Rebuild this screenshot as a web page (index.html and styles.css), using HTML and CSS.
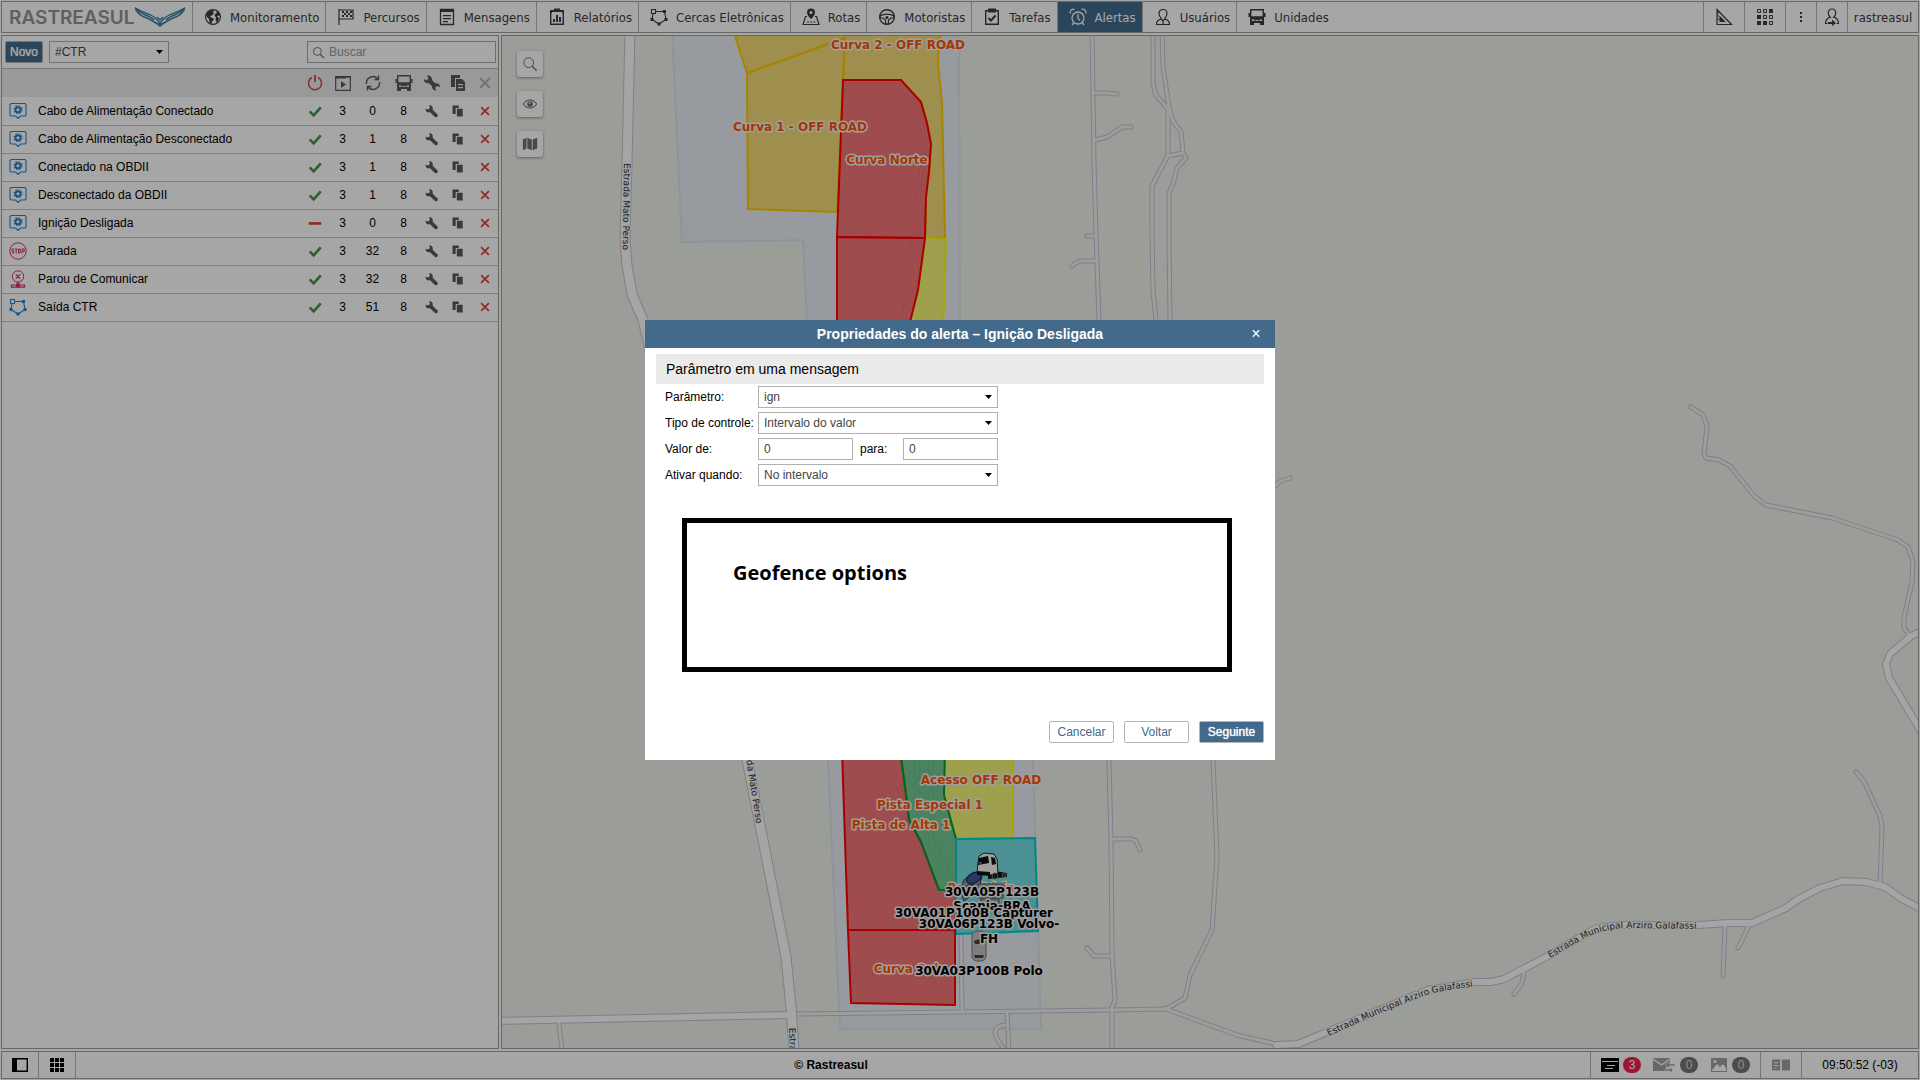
FILE: index.html
```html
<!DOCTYPE html>
<html lang="pt-BR">
  <head>
    <meta charset="UTF-8" />
    <meta name="viewport" content="width=device-width, initial-scale=1.0" />
    <title>Rastreasul</title>
    <link rel="stylesheet" href="styles.css">
  </head>
  <body>
    <!-- Icon set -->
    <svg class="sprite" aria-hidden="true">
      <symbol id="i-globe" viewBox="0 0 18 18">
        <circle cx="9" cy="9" r="7.4" fill="none" stroke="currentColor" stroke-width="1.2" />
        <path d="M3 5l4-3 3 .5-1 2 1 1-2 2-2 .5 1 1.500 2 .5 1 1.500-2 2-.5 3-2-2.500-.5-3L3 9 2 7zM12 2.500l3 2.500 1 3-1.500-.5-1.500 1 2 1.500-.5 2.500-2 2-1-3 .5-2-1.500-2 1-2 1.500-.5z" fill="currentColor" />
      </symbol>
      <symbol id="i-flag" viewBox="0 0 18 18">
        <path d="M2 1v16M2 2h14v9H2" fill="none" stroke="currentColor" stroke-width="1.2" />
        <path d="M5 3h2v2H5zM9 3h2v2H9zM13 3h2v2h-2zM7 5h2v2H7zM11 5h2v2h-2zM5 7h2v2H5zM9 7h2v2H9zM13 7h2v2h-2z" fill="currentColor" />
      </symbol>
      <symbol id="i-doc" viewBox="0 0 18 18">
        <path d="M2.500 1.500h13v15h-13z" fill="none" stroke="currentColor" stroke-width="1.3" />
        <path d="M2 1h14v3H2zM5 7h8v1.300H5zM5 10h8v1.300H5zM5 13h5v1.300H5z" fill="currentColor" />
      </symbol>
      <symbol id="i-report" viewBox="0 0 18 18">
        <path d="M2.700 2.700h12.600v13.600H2.700z" fill="none" stroke="currentColor" stroke-width="1.400" />
        <path d="M2 2h14v3h-2V4H4v1H2zM6 .5h6V3H6zM5 11h2v3H5zM8 7h2v7H8zM11 9h2v5h-2z" fill="currentColor" />
      </symbol>
      <symbol id="i-fence" viewBox="0 0 18 18">
        <path d="M3.500 3.500h11l1.500 8-7 4.500-7-4.500z" fill="none" stroke="currentColor" stroke-width="1.100" />
        <path d="M1.500 1.500h4v4h-4z" fill="var(--hole, #fff)" stroke="currentColor" stroke-width="1.100" />
        <path d="M13 2h3v3h-3zM.5 10h3v3h-3zM14.500 10h3v3h-3zM7.500 14.500h3v3h-3z" fill="currentColor" />
      </symbol>
      <symbol id="i-route" viewBox="0 0 18 18">
        <path d="M5 8.500H3.500L1 16.500h16l-2.500-8H13" fill="none" stroke="currentColor" stroke-width="1.200" />
        <path d="M9 .5a4 4 0 0 0-4 4c0 3 4 6.500 4 6.500s4-3.500 4-6.500a4 4 0 0 0-4-4zm0 2.500a1.500 1.500 0 1 1 0 3 1.500 1.500 0 0 1 0-3z" fill="currentColor" />
        <path d="M5 14h9" stroke="currentColor" stroke-width="1.200" stroke-dasharray="2 1.200" />
      </symbol>
      <symbol id="i-wheel" viewBox="0 0 18 18">
        <circle cx="9" cy="9" r="7.300" fill="none" stroke="currentColor" stroke-width="1.400" />
        <path d="M2 8c4-2.500 10-2.500 14 0v2h-3l-2.500 2v4h-3v-4L5 10H2z" fill="none" stroke="currentColor" stroke-width="1.200" />
        <circle cx="9" cy="9.500" r="1.500" fill="currentColor" />
      </symbol>
      <symbol id="i-task" viewBox="0 0 18 18">
        <path d="M2.700 2.700h12.600v13.600H2.700z" fill="none" stroke="currentColor" stroke-width="1.400" />
        <path d="M5 .5h8v4H5z" fill="currentColor" />
        <path d="M5.500 10l2.500 2.500 4.500-5" fill="none" stroke="currentColor" stroke-width="2" />
      </symbol>
      <symbol id="i-alarm" viewBox="0 0 18 18">
        <circle cx="9" cy="10" r="6" fill="none" stroke="currentColor" stroke-width="1.300" />
        <path d="M1.500 5.500a3 3 0 0 1 4-4M16.500 5.500a3 3 0 0 0-4-4M4.500 15L3 17M13.500 15l1.500 2M9 6v4.500l2 2" fill="none" stroke="currentColor" stroke-width="1.300" />
      </symbol>
      <symbol id="i-user" viewBox="0 0 18 18">
        <path d="M9 1.500c2.500 0 4 1.600 4 4 0 2-1 3.500-2 4.200v1.500c3 .6 4.500 1.800 4.500 5.300h-13c0-3.500 1.500-4.700 4.500-5.300V9.700c-1-.7-2-2.200-2-4.200 0-2.400 1.500-4 4-4zM7 11l2 2 2-2M9 13v3" fill="none" stroke="currentColor" stroke-width="1.200" />
      </symbol>
      <symbol id="i-bus" viewBox="0 0 18 18">
        <path d="M2.700 1.700h12.600V9H2.700z" fill="none" stroke="currentColor" stroke-width="1.400" />
        <path d="M2 9h14v6H2zM2 15h4v2H2zM12 15h4v2h-4zM.5 5H2v4H.5zM16 5h1.500v4H16z" fill="currentColor" />
        <path d="M4 11.500h2.500v1.500H4zM11.500 11.500H14v1.500h-2.500zM7.500 12h3v1h-3z" fill="var(--hole, #fff)" />
      </symbol>
      <symbol id="i-ruler" viewBox="0 0 18 18">
        <path d="M2 1.500l14.500 15H2zM5 9l4.500 4.500H5zM2 5h2M2 8h2M2 11h2" fill="none" stroke="currentColor" stroke-width="1.200" />
        <path d="M5 9l4.500 4.500H5z" fill="currentColor" />
      </symbol>
      <symbol id="i-apps" viewBox="0 0 18 18">
        <path d="M1.500 1.500h3v3h-3zM7.500 1.500h3v3h-3zM7.500 7.500h3v3h-3zM13.500 7.500h3v3h-3zM13.500 13.500h3v3h-3z" fill="none" stroke="currentColor" />
        <path d="M13 1h4v4h-4zM1 7h4v4H1zM1 13h4v4H1zM7 13h4v4H7z" fill="currentColor" />
      </symbol>
      <symbol id="i-dots" viewBox="0 0 18 18">
        <path d="M8 4h2v2H8zM8 8h2v2H8zM8 12h2v2H8z" fill="currentColor" />
      </symbol>
      <symbol id="i-login" viewBox="0 0 18 18">
        <path d="M9 1c2.300 0 3.700 1.500 3.700 4 0 2-1 3.500-2 4.200 3 .8 4.800 2 4.800 6.300h-2M4.500 15.500h-2c0-4.300 1.800-5.500 4.800-6.300-1-.7-2-2.200-2-4.200 0-2.500 1.400-4 3.700-4" fill="none" stroke="currentColor" stroke-width="1.200" />
        <path d="M5 14h4v-2.500l4 3.500-4 3V16H5z" fill="currentColor" />
      </symbol>
      <symbol id="i-search" viewBox="0 0 18 18">
        <circle cx="7.500" cy="7.500" r="5.500" fill="none" stroke="currentColor" stroke-width="1.100" />
        <path d="M11.500 11.500l5 5" stroke="currentColor" stroke-width="1.500" />
      </symbol>
      <symbol id="i-eye" viewBox="0 0 18 18">
        <path d="M1.500 9c4-6 11-6 15 0-4 6-11 6-15 0z" fill="none" stroke="currentColor" stroke-width="1.200" />
        <circle cx="9" cy="9" r="3.200" fill="currentColor" />
        <circle cx="8.500" cy="8" r="1" fill="#fff" />
      </symbol>
      <symbol id="i-map" viewBox="0 0 18 18">
        <path d="M1 4l4-2v12l-4 2zM6 2l5 2v12l-5-2zM12 4l5-2v12l-5 2z" fill="currentColor" />
      </symbol>
      <symbol id="i-power" viewBox="0 0 18 18">
        <path d="M6 3.500a6.500 6.500 0 1 0 6 0" fill="none" stroke="currentColor" stroke-width="1.500" />
        <path d="M9 1v7" stroke="currentColor" stroke-width="1.800" />
      </symbol>
      <symbol id="i-play" viewBox="0 0 18 18">
        <path d="M1.700 2.700h14.600v13.600H1.700z" fill="none" stroke="currentColor" stroke-width="1.200" />
        <path d="M1 2h11v2.500H1zM13 2h1.500v2H13zM15.500 2H17v2h-1.500zM7 7l5 3.500L7 14z" fill="currentColor" />
      </symbol>
      <symbol id="i-refresh" viewBox="0 0 18 18">
        <path d="M2.500 10a6.500 6.500 0 0 1 11-5.500M15.500 8a6.500 6.500 0 0 1-11 5.500M14.500 1.500v4h-4M3.500 16.500v-4h4" fill="none" stroke="currentColor" stroke-width="1.400" />
      </symbol>
      <symbol id="i-wrench" viewBox="0 0 18 18">
        <path d="M5.500 1.500l.8 3.500L4 7 .8 6C.5 9.500 3 11.500 6.500 10.500l6.300 6.200c2 1.300 4.700-1.200 3.400-3.200L9.800 7.500C10.800 4 8.800 1.500 5.500 1.500z" fill="currentColor" />
      </symbol>
      <symbol id="i-wrench2" viewBox="0 0 18 18">
        <path d="M4 1.500l1.500 3-2 2-2.500-1.500c-.5 3 2 4.700 4.500 4L9 12c-.3 3 2 4.500 4.500 4.500L12 14l2-2 3 1c0-3-2.500-4.200-4.500-3.500L9 6C9.300 3 7 1 4 1.500z" fill="currentColor" />
      </symbol>
      <symbol id="i-copy" viewBox="0 0 18 18">
        <path d="M2 2h8v3H6v8H2zM7.500 6h7.500v10H7.500z" fill="currentColor" />
      </symbol>
      <symbol id="i-copy2" viewBox="0 0 18 18">
        <path d="M2 1h9v3H6v9H2zM7 5h6l3 3v9H7z" fill="currentColor" />
        <path d="M9 10h5v1.200H9zM9 13h5v1.200H9z" fill="var(--hole, #fff)" />
      </symbol>
      <symbol id="i-x" viewBox="0 0 18 18">
        <path d="M4 4l10 10M14 4L4 14" stroke="currentColor" stroke-width="2.200" />
      </symbol>
      <symbol id="i-check" viewBox="0 0 18 18">
        <path d="M3 9.500l4.500 4.500L15.500 5" fill="none" stroke="currentColor" stroke-width="2.800" />
      </symbol>
      <symbol id="i-minus" viewBox="0 0 18 18">
        <path d="M2 8h14v3H2z" fill="currentColor" />
      </symbol>
      <symbol id="i-param" viewBox="0 0 18 18">
        <path d="M2 1.500h14l1 1V13l-1 1h-4.500L9 16.500 6.500 14H2l-1-1V2.500z" fill="none" stroke="currentColor" stroke-width="1.100" />
        <circle cx="9" cy="7.700" r="2.500" fill="none" stroke="currentColor" stroke-width="2" />
        <circle cx="9" cy="7.700" r="3.900" fill="none" stroke="currentColor" stroke-width="1.300" stroke-dasharray="1.500 1.560" />
      </symbol>
      <symbol id="i-stop" viewBox="0 0 18 18">
        <circle cx="9" cy="9" r="8.200" fill="none" stroke="currentColor" />
        <path d="M5 7H3v2h1.800v2H2.500M5.800 7h2.700M7.200 7v4.500M9.500 7h1.700v4H9.500zM13 11.500V7h2.200v2.500H13" fill="none" stroke="currentColor" />
      </symbol>
      <symbol id="i-lost" viewBox="0 0 18 18">
        <circle cx="9" cy="6.500" r="5.700" fill="none" stroke="currentColor" />
        <path d="M6.800 4.300l4.400 4.400M11.200 4.300L6.800 8.700M9 12v3M2.500 15h13v2.200h-13z" fill="none" stroke="currentColor" stroke-width="1.200" />
        <path d="M7 13.500h4V17H7z" fill="currentColor" />
      </symbol>
      <symbol id="i-panel" viewBox="0 0 18 18">
        <path d="M1.700 2.700h14.600v12.600H1.700z" fill="none" stroke="currentColor" stroke-width="1.400" />
        <path d="M1 2h5v14H1z" fill="currentColor" />
      </symbol>
      <symbol id="i-grid" viewBox="0 0 18 18">
        <path d="M2 2h4v4H2zM7 2h4v4H7zM12 2h4v4h-4zM2 7h4v4H2zM7 7h4v4H7zM12 7h4v4h-4zM2 12h4v4H2zM7 12h4v4H7zM12 12h4v4h-4z" fill="currentColor" />
      </symbol>
      <symbol id="i-window" viewBox="0 0 18 18">
        <path d="M0 2h18v14H0z" fill="currentColor" />
        <path d="M1 5h16v1H1zM6 9h8v1H6zM4 12h8v1H4z" fill="#fff" />
      </symbol>
      <symbol id="i-mail" viewBox="0 0 23 18">
        <path d="M0 2h17v6h-3v3h-1v4H0z" fill="currentColor" />
        <path d="M0 3l8.500 6L17 3" fill="none" stroke="#fff" stroke-width="1.300" />
        <path d="M12 9l4-3v2h6v2h-6v2zM20 14l-3-3v2h-5v2h5v2z" fill="currentColor" stroke="#fff" stroke-width=".5" />
      </symbol>
      <symbol id="i-image" viewBox="0 0 18 18">
        <path d="M1 2h16v14H1z" fill="currentColor" />
        <path d="M2 14l5-6 3 3 3-3 3 4v3H2z" fill="#fff" />
        <circle cx="5" cy="5.500" r="1.500" fill="#fff" />
      </symbol>
      <symbol id="i-news" viewBox="0 0 20 18">
        <path d="M0 3h9v12H0zM11 3h9v12h-9z" fill="currentColor" />
        <path d="M2 6h5v1H2zM2 9h5v1H2zM2 12h3v1H2z" fill="#fff" />
      </symbol>
    </svg>

    <div class="app">
      <header class="topbar">
        <a href="#" class="logo">
          <span>RASTREASUL</span>
          <svg class="logo-wings" viewBox="0 0 50 20" aria-hidden="true">
            <path d="M0 1c8 5 14 5 19 9 3 2.500 5 4 6 7 1-3 3-4.500 6-7 5-4 11-4 19-9-4 9-11 9-16 12-4 2-6 4-9 6-3-2-5-4-9-6C11 10 4 10 0 1z" fill="none" stroke="currentColor" stroke-width="1.500" />
            <path d="M3 4c6 4 12 5 16 9M47 4c-6 4-12 5-16 9M22 10l3 3 3-3" fill="none" stroke="currentColor" stroke-width="1.500" />
            <path d="M20 14l5 3 5-3-5 6z" fill="currentColor" />
          </svg>
        </a>
        <nav class="nav">
          <a href="#"><svg><use href="#i-globe" /></svg>Monitoramento</a>
          <a href="#"><svg><use href="#i-flag" /></svg>Percursos</a>
          <a href="#"><svg><use href="#i-doc" /></svg>Mensagens</a>
          <a href="#"><svg><use href="#i-report" /></svg>Relatórios</a>
          <a href="#"><svg><use href="#i-fence" /></svg>Cercas Eletrônicas</a>
          <a href="#"><svg><use href="#i-route" /></svg>Rotas</a>
          <a href="#"><svg><use href="#i-wheel" /></svg>Motoristas</a>
          <a href="#"><svg><use href="#i-task" /></svg>Tarefas</a>
          <a href="#" class="active"><svg><use href="#i-alarm" /></svg>Alertas</a>
          <a href="#"><svg><use href="#i-user" /></svg>Usuários</a>
          <a href="#"><svg><use href="#i-bus" /></svg>Unidades</a>
        </nav>
        <div class="tools">
          <button type="button" class="tool" aria-label="Ferramentas"><svg><use href="#i-ruler" /></svg></button>
          <button type="button" class="tool" aria-label="Aplicativos"><svg><use href="#i-apps" /></svg></button>
          <button type="button" class="tool narrow" aria-label="Mais"><svg><use href="#i-dots" /></svg></button>
          <button type="button" class="tool narrow" aria-label="Entrar como"><svg><use href="#i-login" /></svg></button>
          <button type="button" class="tool account">rastreasul</button>
        </div>
      </header>

      <main class="workspace">
        <section class="panel">
          <form class="filter">
            <button type="button" class="btn primary">Novo</button>
            <select class="field group" aria-label="Recurso">
              <option>#CTR</option>
            </select>
            <label class="search">
              <svg><use href="#i-search" /></svg>
              <input type="text" placeholder="Buscar" aria-label="Buscar" />
            </label>
          </form>
          <table class="alerts">
            <colgroup>
              <col class="c-icon"><col><col class="c-27"><col class="c-29"><col class="c-31"><col class="c-31"><col class="c-25"><col class="c-27"><col class="c-27">
            </colgroup>
            <thead>
              <tr>
                <th></th>
                <th></th>
                <th class="red"><svg><use href="#i-power" /></svg></th>
                <th><svg><use href="#i-play" /></svg></th>
                <th><svg><use href="#i-refresh" /></svg></th>
                <th><svg><use href="#i-bus" /></svg></th>
                <th><svg><use href="#i-wrench2" /></svg></th>
                <th><svg><use href="#i-copy2" /></svg></th>
                <th class="muted"><svg><use href="#i-x" /></svg></th>
              </tr>
            </thead>
            <tbody id="alert-rows"></tbody>
          </table>
        </section>

        <section class="map">
          <svg class="map-canvas" viewBox="502 36 1416 1012" preserveAspectRatio="xMidYMid slice">
            <defs>
              <path id="mato-1" d="M624 163L623 230L622 300" />
              <path id="mato-2" d="M741 738L747 764L757 827L764 860" />
              <path id="mato-3" d="M789 1028L793 1120" />
              <path id="arz-1" d="M1329 1036C1350 1026 1400 1004 1430 994Q1455 987 1500 985" />
              <path id="arz-2" d="M1550 958L1580 941Q1600 929 1625 928L1720 929" />
              <g id="minor-roads">
                <path d="M1092 30L1093 93L1094 163L1096 233L1099 320L1109 760L1111 840L1112 953L1115 1000L1112 1008V1050" />
                <path d="M1095 93L1107 93L1117 94M1095 140L1107 137L1122 127L1131 127M1087 236H1095M1096 261H1079L1072 266" />
                <path d="M1153 30V83L1156 95L1168 109V155L1152 186V230L1153 290L1156 320L1213 760L1217 857L1212 930L1190 975L1185 998L1166 1009" />
                <path d="M1162 30L1163 67L1169 107L1173 121L1181 132L1183 153L1186 158L1177 168L1173 184L1169 193V237L1170 320M1168 156L1183 153" />
                <path d="M1111 839L1132 839L1136 841L1140 850M1111 956H1094L1087 948" />
                <path d="M798 1014L1111 1010L1166 1009L1237 1035L1280 1045" />
                <path d="M1007 1013L1009 1050M1007 1025Q997 1025 995 1032Q995 1038 1005 1050M559 1024L562 1050M961 935L962 1010" />
                <path d="M1691 407L1703 415L1707 426L1704 453L1706 458L1719 460L1730 466L1755 497L1766 505L1832 518L1898 540L1908 547L1913 562L1912 582L1904 617V628L1909 635" />
                <path d="M1856 772L1865 783L1880 816L1882 827L1880 884M1725 926L1723 976M1749 926L1738 948M1524 971L1522 983L1514 994M1270 489L1281 481L1290 478" />
              </g>
              <g id="mid-roads">
                <path d="M495 1021L791 1015M1925 632L1918 633L1911 636L1890 654L1886 664L1889 678L1925 738" />
                <path d="M1277 1045L1298 1044L1327 1032L1403 1000L1428 990L1475 982H1491L1504 979L1525 968L1550 955L1580 937L1597 928L1622 925H1698L1729 923H1752L1786 908L1797 900L1820 888L1843 881L1866 882L1885 887L1902 899L1925 911" />
              </g>
              <path id="main-road" d="M630 30L627 163L625 240L627 265L632 294L643 320L747 760L763 840L786 957L791 1007L794 1050" />
              <g id="track">
                <path d="M868 320V176L857 130Q852 105 866 98Q880 86 900 94Q926 106 924 150L904 320M868 760V950Q872 990 905 989Q945 988 949 950L890 760" />
                <path d="M917 760V808L951 880M931 760V845L950 880" />
              </g>
            </defs>

            <rect x="0" y="0" width="3000" height="2000" fill="#eff1eb" />
            <path class="site" d="M672 30L682 242L803 240L807 320L828 760L840 1029H1041L1033 760L960 320L959 30Z" />

            <use href="#minor-roads" class="casing minor" />
            <use href="#mid-roads" class="casing mid" />
            <use href="#main-road" class="casing main" />
            <use href="#minor-roads" class="road minor" />
            <use href="#mid-roads" class="road mid" />
            <use href="#main-road" class="road main" />
            <use href="#track" class="casing minor faint" />
            <use href="#track" class="road track" />

            <g class="zones">
              <path class="z-amber" d="M733 30L747 73L845 38V30Z" />
              <path class="z-amber" d="M747 73L748 209L837 212L843 80L845 38Z" />
              <path class="z-amber" d="M845 30H940L938 63L942 103L945 238H925L926 197L929 172L931 144L927 123L921 102L901 80H843Z" />
              <path class="z-yellow" d="M925 238L946 239L943 330H908L918 290Z" />
              <path class="z-red" d="M837 237L925 238L918 290L908 330H837Z" />
              <path class="z-red" d="M843 80H901L921 102L927 123L931 144L929 172L926 197L925 238L837 237Z" />
              <path class="z-yellow" d="M945 750L944 795L956 839L1013 838V750Z" />
              <path class="z-red" d="M842 750L848 930H955L956 890H939L921 842L909 820L905 787L900 750Z" />
              <path class="z-green" d="M900 750L905 787L909 820L921 842L939 890H956V839L944 795L945 750Z" />
              <path class="z-teal" d="M956 839L1035 838L1038 931L956 934Z" />
              <path class="z-red" d="M848 930H955V1005L851 1003Z" />
            </g>

            <g class="road-name">
              <text><textPath href="#mato-1">Estrada Mato Perso</textPath></text>
              <text><textPath href="#mato-2">Estrada Mato Perso</textPath></text>
              <text><textPath href="#mato-3">Estrada</textPath></text>
              <text><textPath href="#arz-1">Estrada Municipal Arziro Galafassi</textPath></text>
              <text><textPath href="#arz-2">Estrada Municipal Arziro Galafassi</textPath></text>
            </g>

            <g class="zone-name">
              <text x="898" y="49">Curva 2 - OFF ROAD</text>
              <text x="800" y="131">Curva 1 - OFF ROAD</text>
              <text x="887" y="164">Curva Norte</text>
              <text x="981" y="784">Acesso OFF ROAD</text>
              <text x="930" y="809">Pista Especial 1</text>
              <text x="901" y="829">Pista de Alta 1</text>
              <text x="906" y="973">Curva Sul</text>
              <text x="981" y="892">Refeitório</text>
            </g>

            <!-- Vehicles -->
            <g>
              <path d="M960 890l4-10 10-8 8 3-2 10-8 10-8 6z" fill="#8d97a3" stroke="#334" />
              <ellipse cx="974" cy="878" rx="8" ry="5" fill="#3c5a9a" stroke="#223" transform="rotate(-25 974 878)" />
              <path d="M966 886l6-4 3 4-6 6z" fill="#2c4a52" />
              <path d="M978 884h25v14h-25zM981 899h18v7h-18z" fill="#a9abac" stroke="#555" />
              <path d="M988 870l19 3v4l-19 2z" fill="#111" />
              <path d="M979 856l5-3 10 1 3 5 1 14-7 2-14-3 1-9z" fill="#f4f4f4" stroke="#222" />
              <path d="M979 858l9-2 1 7-11 2zM991 857l4 1 1 6-4 1zM977 871l13 1v4l-13-1z" fill="#111" />
              <path d="M979 862h3v2h-3z" fill="#3355cc" />
              <circle cx="995" cy="876" r="3" fill="#222" stroke="#777" />
              <circle cx="1004" cy="875" r="2" fill="#222" stroke="#777" />
              <rect x="972" y="931" width="14" height="30" rx="5" fill="#c4c4c4" stroke="#777" />
              <path d="M974 941q5-3 10 0l-1 3h-8zM974 955h10l-1 3h-8z" fill="#444" />
            </g>
            <g class="unit-name">
              <text x="992" y="910">Scania-BRA</text>
              <text x="992" y="896">30VA05P123B</text>
              <text x="974" y="917">30VA01P100B Capturer</text>
              <text x="989" y="928">30VA06P123B Volvo-</text>
              <text x="989" y="943">FH</text>
              <text x="979" y="975">30VA03P100B Polo</text>
            </g>
          </svg>
          <div class="map-buttons">
            <button type="button" aria-label="Procurar no mapa"><svg><use href="#i-search" /></svg></button>
            <button type="button" aria-label="Camadas visíveis"><svg><use href="#i-eye" /></svg></button>
            <button type="button" aria-label="Fonte do mapa"><svg><use href="#i-map" /></svg></button>
          </div>
        </section>
      </main>

      <footer class="statusbar">
        <div class="status-left">
          <button type="button" aria-label="Painel esquerdo"><svg><use href="#i-panel" /></svg></button>
          <button type="button" aria-label="Grade"><svg><use href="#i-grid" /></svg></button>
        </div>
        <div class="copyright">© Rastreasul</div>
        <div class="status-right">
          <div class="counters">
            <svg class="on"><use href="#i-window" /></svg><span class="badge hot">3</span>
            <svg class="mail"><use href="#i-mail" /></svg><span class="badge">0</span>
            <svg><use href="#i-image" /></svg><span class="badge">0</span>
          </div>
          <div class="news"><svg><use href="#i-news" /></svg></div>
          <time class="clock">09:50:52 (-03)</time>
        </div>
      </footer>
    </div>

    <div class="overlay">
      <form class="modal" role="dialog" aria-labelledby="modal-title">
        <div class="modal-head">
          <h1 id="modal-title">Propriedades do alerta – Ignição Desligada</h1>
          <button type="button" class="close" aria-label="Fechar">×</button>
        </div>
        <div class="modal-body">
          <h2>Parâmetro em uma mensagem</h2>
          <div class="fields">
            <label for="param">Parâmetro:</label>
            <select id="param" class="field"><option>ign</option></select>

            <label for="control">Tipo de controle:</label>
            <select id="control" class="field"><option>Intervalo do valor</option></select>

            <label for="from">Valor de:</label>
            <div class="range">
              <input id="from" class="field" type="text" value="0" />
              <label for="to">para:</label>
              <input id="to" class="field" type="text" value="0" />
            </div>

            <label for="when">Ativar quando:</label>
            <select id="when" class="field"><option>No intervalo</option></select>
          </div>
          <div class="geofence">Geofence options</div>
          <div class="actions">
            <button type="button" class="btn">Cancelar</button>
            <button type="button" class="btn">Voltar</button>
            <button type="button" class="btn primary">Seguinte</button>
          </div>
        </div>
      </form>
    </div>

    <script>
      const alerts = [
        { icon: "param", name: "Cabo de Alimentação Conectado", on: true, fired: 0 },
        { icon: "param", name: "Cabo de Alimentação Desconectado", on: true, fired: 1 },
        { icon: "param", name: "Conectado na OBDII", on: true, fired: 1 },
        { icon: "param", name: "Desconectado da OBDII", on: true, fired: 1 },
        { icon: "param", name: "Ignição Desligada", on: false, fired: 0 },
        { icon: "stop", name: "Parada", on: true, fired: 32 },
        { icon: "lost", name: "Parou de Comunicar", on: true, fired: 32 },
        { icon: "fence", name: "Saída CTR", on: true, fired: 51 },
      ];

      const icon = (name) => `<svg><use href="#i-${name}" /></svg>`;

      document.getElementById("alert-rows").innerHTML = alerts
        .map(
          (a) => `
            <tr>
              <td class="type ${a.icon}">${icon(a.icon)}</td>
              <td class="name">${a.name}</td>
              <td class="${a.on ? "green" : "red"}">${icon(a.on ? "check" : "minus")}</td>
              <td>3</td>
              <td>${a.fired}</td>
              <td>8</td>
              <td><button type="button" aria-label="Editar">${icon("wrench")}</button></td>
              <td><button type="button" aria-label="Copiar">${icon("copy")}</button></td>
              <td><button type="button" class="red" aria-label="Excluir">${icon("x")}</button></td>
            </tr>`
        )
        .join("");
    </script>
  </body>
</html>
```

FILE: styles.css
```css
* {
  box-sizing: border-box;
}
body {
  margin: 0;
  font-family: "Liberation Sans", Arial, sans-serif;
  font-size: 12px;
  color: #000;
  background: #fff;
}
button,
input,
select {
  font: inherit;
  color: inherit;
}
button {
  border: 0;
  padding: 0;
  background: none;
  cursor: pointer;
}
a {
  color: inherit;
  text-decoration: none;
}
svg {
  width: 18px;
  height: 18px;
  display: block;
  flex: none;
}
.sprite {
  position: absolute;
  width: 0;
  height: 0;
}
.app {
  height: 100vh;
  padding: 1px;
  display: flex;
  flex-direction: column;
  gap: 2px;
}

/* Top bar */
.topbar {
  height: 32px;
  flex: none;
  display: flex;
  border: 1px solid #a0a0a0;
  font-family: "DejaVu Sans Condensed", "DejaVu Sans", sans-serif;
  font-size: 13px;
  color: #3c3c3e;
}
.logo {
  width: 191px;
  padding-left: 7px;
  display: flex;
  align-items: center;
  font-family: Inter, sans-serif;
  font-weight: 600;
  font-size: 19px;
  color: #929294;
  border-right: 1px solid #b4b4b4;
}
.logo-wings {
  width: 50px;
  height: 20px;
  color: #3d809e;
}
.nav {
  display: flex;
  flex: 1;
}
.nav a {
  display: flex;
  align-items: center;
  gap: 8px;
  padding: 0 6px 0 11px;
  border-right: 1px solid #b4b4b4;
}
.nav a:last-child {
  border-right: 0;
}
.nav a.active {
  background: #426a8c;
  color: #fff;
}
.tools {
  display: flex;
}
.tool {
  width: 41px;
  display: flex;
  align-items: center;
  justify-content: center;
  border-left: 1px solid #b4b4b4;
}
.tool.narrow {
  width: 31px;
}
.tool.account {
  width: 71px;
}

/* Alerts panel */
.workspace {
  flex: 1;
  min-height: 0;
  display: flex;
  gap: 2px;
}
.panel {
  width: 498px;
  flex: none;
  border: 1px solid #a0a0a0;
}
.filter {
  display: flex;
  gap: 6px;
  padding: 5px 2px 5px 3px;
  border-bottom: 1px solid #bdbdbd;
}
.btn {
  height: 22px;
  min-width: 65px;
  border: 1px solid #b5b5b5;
  border-radius: 2px;
  background: #fff;
  color: #436a8a;
}
.btn.primary {
  background: #436a8a;
  color: #fff;
  text-shadow: 0 0 1px #fff;
}
.filter .btn {
  min-width: 38px;
}
.field {
  width: 100%;
  height: 22px;
  padding: 0 5px;
  border: 1px solid #b0b0b0;
  border-radius: 0;
  background: #fff;
  color: #444;
}
select.field {
  appearance: none;
  background: #fff url("data:image/svg+xml,%3Csvg xmlns='http://www.w3.org/2000/svg' width='7' height='4'%3E%3Cpath d='M0 0h7L3.500 4z'/%3E%3C/svg%3E") no-repeat right 5px center;
}
.field.group {
  width: 120px;
}
.search {
  width: 189px;
  height: 22px;
  margin-left: auto;
  padding-left: 4px;
  display: flex;
  align-items: center;
  gap: 4px;
  border: 1px solid #a8a8a8;
  color: #555;
}
.search svg {
  width: 13px;
  height: 13px;
}
.search input {
  flex: 1;
  min-width: 0;
  border: 0;
  padding: 0;
  outline: 0;
}
.search input::placeholder {
  color: #9a9a9a;
}
.alerts {
  width: 100%;
  table-layout: fixed;
  border-collapse: collapse;
}
.c-icon {
  width: 33px;
}
.c-25 {
  width: 25px;
}
.c-27 {
  width: 27px;
}
.c-29 {
  width: 29px;
}
.c-31 {
  width: 31px;
}
.alerts th,
.alerts td {
  height: 28px;
  padding: 0;
  text-align: center;
  color: #000;
}
.alerts th {
  background: #e9ebee;
  --hole: #e9ebee;
  color: #58585a;
}
.alerts td {
  border-bottom: 1px solid #c4c4c4;
}
.alerts td.name {
  padding-left: 3px;
  text-align: left;
}
.alerts svg {
  width: 16px;
  height: 16px;
  margin: 0 auto;
}
.alerts th svg {
  width: 18px;
  height: 18px;
}
.alerts button {
  color: #58585a;
  vertical-align: middle;
}
.alerts button svg {
  width: 14px;
  height: 14px;
}
.alerts .type {
  padding-right: 2px;
}
.alerts .type svg {
  width: 18px;
  height: 18px;
  margin-left: 7px;
}
.alerts .param,
.alerts .fence {
  color: #2b82d2;
}
.alerts .stop,
.alerts .lost {
  color: #d8305a;
}
.alerts .green {
  color: #3f9447;
}
.alerts .red {
  color: #e0403a;
}
.alerts .muted {
  color: #b4b4b4;
}

/* Map */
.map {
  flex: 1;
  min-width: 0;
  position: relative;
  overflow: hidden;
  border: 1px solid #a0a0a0;
}
.map-canvas {
  width: 100%;
  height: 100%;
}
.map-buttons {
  position: absolute;
  top: 15px;
  left: 15px;
  display: flex;
  flex-direction: column;
  gap: 14px;
}
.map-buttons button {
  width: 26px;
  height: 26px;
  display: flex;
  align-items: center;
  justify-content: center;
  border-radius: 3px;
  background: #fff;
  color: #707070;
  box-shadow: 0 1px 3px rgba(0, 0, 0, 0.4);
}
.map-buttons svg {
  width: 16px;
  height: 16px;
}
.site {
  fill: #e8edf3;
  stroke: #d9e4ee;
  stroke-width: 2;
}
.casing,
.road {
  fill: none;
  stroke-linejoin: round;
  stroke-linecap: round;
}
.casing {
  stroke: #c3c2d4;
}
.casing.minor {
  stroke-width: 5px;
}
.casing.mid {
  stroke-width: 8px;
}
.casing.main {
  stroke-width: 11px;
}
.casing.faint {
  opacity: 0.4;
}
.road {
  stroke: #fdfdfd;
}
.road.minor {
  stroke: #f2f3f0;
  stroke-width: 3px;
}
.road.mid {
  stroke-width: 6px;
}
.road.main {
  stroke-width: 9px;
}
.road.track {
  stroke: #e8edf3;
  stroke-width: 3px;
}
.zones path {
  fill-opacity: 0.5;
  stroke-width: 2;
}
.z-amber {
  fill: #ffcb00;
  stroke: #ffcb00;
}
.z-yellow {
  fill: #ff0;
  stroke: #ff0;
}
.z-red {
  fill: #f00;
  stroke: #f00;
}
.z-green {
  fill: #00a431;
  stroke: #00a431;
}
.z-teal {
  fill: #00cfcf;
  stroke: #00cfcf;
}
.road-name,
.zone-name,
.unit-name {
  font-family: "DejaVu Sans", sans-serif;
  paint-order: stroke;
  stroke: #f4f4f4;
  stroke-width: 3px;
  stroke-linejoin: round;
}
.road-name {
  font-size: 9px;
  fill: #333;
  stroke-width: 2px;
}
.zone-name,
.unit-name {
  font-size: 12px;
  font-weight: bold;
  text-anchor: middle;
}
.zone-name {
  fill: #ff5500;
}

/* Status bar */
.statusbar {
  height: 28px;
  flex: none;
  display: grid;
  grid-template-columns: 1fr auto 1fr;
  border: 1px solid #a0a0a0;
}
.status-left,
.status-right,
.counters,
.news,
.clock,
.copyright,
.status-left button {
  display: flex;
  align-items: center;
  justify-content: center;
}
.status-left {
  justify-content: flex-start;
  align-items: stretch;
}
.status-left button {
  width: 37px;
  border-right: 1px solid #b4b4b4;
}
.copyright {
  font-weight: bold;
  padding-right: 258px;
}
.status-right {
  justify-content: flex-end;
  align-items: stretch;
}
.counters {
  width: 170px;
  gap: 4px;
  color: #a0a0a0;
  border-left: 1px solid #b4b4b4;
}
.counters .on {
  color: #000;
}
.counters .mail {
  width: 23px;
}
.badge {
  width: 18px;
  height: 16px;
  margin-right: 8px;
  border-radius: 8px;
  background: #757575;
  color: #ddd;
  line-height: 16px;
  text-align: center;
}
.badge:last-child {
  margin-right: 0;
}
.badge.hot {
  background: #f5204c;
  color: #fff;
}
.news {
  width: 41px;
  color: #a0a0a0;
  border-left: 1px solid #b4b4b4;
}
.clock {
  width: 117px;
  border-left: 1px solid #b4b4b4;
}

/* Modal */
.overlay {
  position: fixed;
  inset: 0;
  display: flex;
  align-items: center;
  justify-content: center;
  background: rgba(0, 0, 0, 0.35);
}
.modal {
  width: 630px;
  background: #fff;
}
.modal-head {
  height: 28px;
  display: grid;
  grid-template-columns: 38px 1fr 38px;
  align-items: center;
  background: #436a8a;
  color: #fff;
}
.modal-head h1 {
  grid-column: 2;
  margin: 0;
  font-size: 14px;
  text-align: center;
}
.close {
  font-size: 16px;
}
.modal-body {
  padding: 6px 11px 17px;
}
.modal-body h2 {
  margin: 0;
  padding: 0 10px;
  font-size: 14px;
  font-weight: normal;
  line-height: 30px;
  background: #eaeaea;
}
.fields {
  display: grid;
  grid-template-columns: 93px 240px;
  row-gap: 4px;
  align-items: center;
  padding: 2px 9px 0;
}
.range {
  display: flex;
  align-items: center;
}
.range .field {
  width: 95px;
}
.range label {
  width: 50px;
  padding-left: 7px;
}
.geofence {
  height: 154px;
  margin: 32px 32px 49px 26px;
  padding: 36px 46px;
  border: 5px solid #000;
  font-family: "Open Sans", sans-serif;
  font-size: 20px;
  font-weight: bold;
}
.actions {
  display: flex;
  justify-content: flex-end;
  gap: 10px;
}
```
